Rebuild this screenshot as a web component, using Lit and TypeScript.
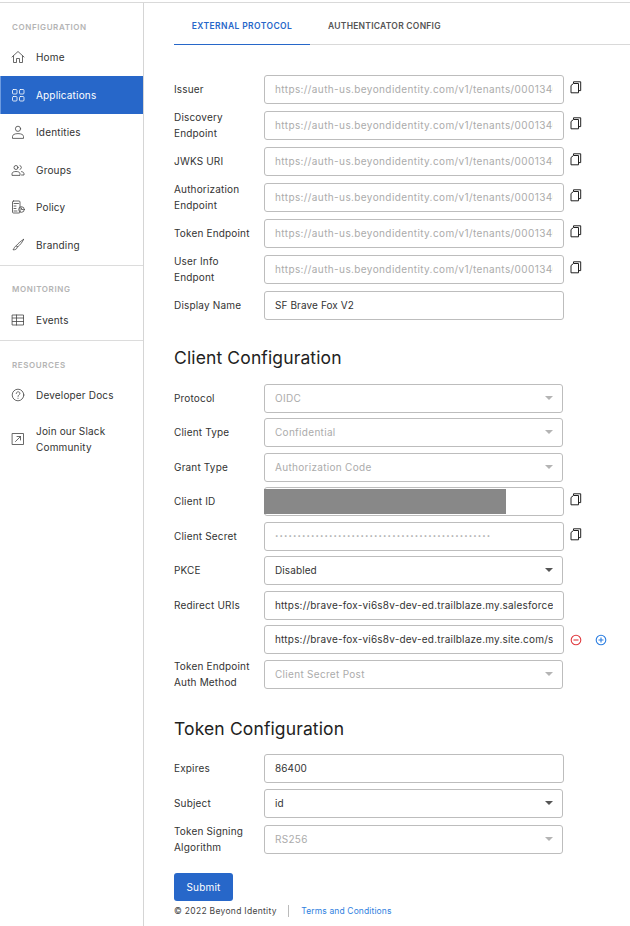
import { LitElement, html, css, svg } from "lit";
import { customElement } from "lit/decorators.js";

const ic = (body: unknown, size = 14, vb = 14) =>
  html`<svg width=${size} height=${size} viewBox="0 0 ${vb} ${vb}" fill="none" stroke="currentColor" stroke-width="0.8" stroke-linecap="round" stroke-linejoin="round">${body}</svg>`;

const icons: Record<string, unknown> = {
  home: ic(svg`<path d="M1 7 7 1.5 13 7M2.5 6V12.5H5.5V8.5H8.5V12.5H11.5V6"/>`),
  apps: ic(svg`<rect x="1.5" y="1.5" width="4.5" height="4.5" rx="1"/><rect x="8.5" y="1.5" width="4.5" height="4.5" rx="1"/><rect x="1.5" y="8.5" width="4.5" height="4.5" rx="1"/><rect x="8.5" y="8.5" width="4.5" height="4.5" rx="1"/>`),
  person: ic(svg`<circle cx="7" cy="3.8" r="2.6"/><path d="M1.5 13V11.5C1.5 9.8 3.5 8.6 7 8.6S12.5 9.8 12.5 11.5V13Z"/>`),
  group: ic(svg`<circle cx="5" cy="4.5" r="2"/><path d="M9 2.6A2 2 0 0 1 9 6.4M1 12V10.8C1 9.3 2.6 8.5 5 8.5S9 9.3 9 10.8V12ZM10.5 8.6C12 8.8 13 9.6 13 10.8V12H10.5"/>`),
  policy: ic(svg`<rect x="1.5" y="1" width="7.5" height="12" rx="1"/><path d="M3 3.5H7.5M3 6H5M3 8.5H5M3 11H6"/><circle cx="10.5" cy="9.5" r="2.8"/><path d="M10.5 8V9.5H12"/>`),
  brush: ic(svg`<path d="M12.5 1.5C10.5 2.5 7 5.5 5.5 7.5L6.8 8.8C8.8 7.2 11.8 3.8 12.5 1.5ZM5 8C3.5 8.3 3.5 10 2 11.8 4.2 12 6.2 11 6.3 9.3Z"/>`),
  table: ic(svg`<rect x="1.5" y="2" width="11" height="10"/><path d="M1.5 5H12.5M1.5 8.5H12.5M5.5 2V12"/>`),
  help: ic(svg`<circle cx="7" cy="7" r="5.8"/><path d="M5.2 5.5C5.2 3.2 8.9 3.2 8.9 5.4 8.9 6.8 7 6.8 7 8.4M7 10.2V10.4"/>`),
  ext: ic(svg`<rect x="1.5" y="1.5" width="11" height="11"/><path d="M4.5 9.5 9.5 4.5M6 4.5H9.5V8"/>`),
};

const copy = html`<svg class="copy" width="12" height="13" viewBox="0 0 12 13" fill="none" stroke="#222" stroke-width="1"><path d="M3.5 2.5V.8H10.7V9.6H8.5"/><path d="M3.5 2.5 8.5 2.5V11.8H1V4.5Z" fill="#fff"/></svg>`;

const URL_VAL = "https://auth-us.beyondidentity.com/v1/tenants/00013400000000/applications";

@customElement("app-root")
export class AppRoot extends LitElement {
  static styles = css`
    :host { display: block; height: 926px; overflow: hidden; background: #fff; font-family: Inter, "Open Sans", sans-serif; font-size: 10px; color: #333; letter-spacing: 0.17px; }
    .shell { display: flex; margin-top: 2px; border-top: 1px solid #d9d9d9; height: 923px; }
    nav { width: 143px; flex: none; border-right: 1px solid #d5d5d5; box-sizing: content-box; }
    .sect { border-bottom: 1px solid #dcdcdc; padding-bottom: 1px; }
    .sect:last-child { border: 0; }
    .head { font-size: 8px; font-weight: 600; color: #b4b4b4; letter-spacing: 0.6px; padding: 0 12px; height: 12px; line-height: 12px; }
    .first { margin-top: 18px; margin-bottom: 5px; }
    .other { margin-top: 17.5px; margin-bottom: 6px; }
    .res { margin-top: 18.5px; margin-bottom: 5px; }
    .item { display: flex; align-items: center; height: 37.5px; padding-left: 11px; gap: 11px; color: #333; }
    .item svg { flex: none; width: 14px; height: 14px; color: #444; }
    .item.active { background: #2767c9; color: #fff; border-left: 1px solid #6d9be0; padding-left: 10px; height: 38px; }
    .item.active svg { color: #fff; }
    .item.two { height: 42px; line-height: 16px; margin-top: 4px; }
    main { flex: 1; min-width: 0; padding-left: 30px; }
    .tabs { display: flex; height: 41px; border-bottom: 1px solid #d9d9d9; font-size: 8.5px; font-weight: 600; letter-spacing: 0.4px; color: #555; }
    .tab { display: flex; align-items: center; justify-content: center; height: 41px; box-sizing: border-box; padding-top: 5px; }
    .tab.on { width: 136px; color: #2767c9; border-bottom: 1px solid #2767c9; height: 42px; }
    .tab.off { margin-left: 18px; letter-spacing: 0.25px; }
    .form { display: grid; grid-template-columns: 90px 300px 60px; grid-auto-rows: 29px; row-gap: 7px; margin-top: 30px; align-items: center; }
    .form.tight { row-gap: 5.5px; margin-top: 13.5px; }
    .form.token { row-gap: 6.25px; margin-top: 13px; }
    label { line-height: 16px; grid-column: 1; white-space: pre-line; margin-top: -1px; }
    .field { grid-column: 2; box-sizing: border-box; width: 300px; height: 29px; border: 1px solid #bdbdbd; border-radius: 3px; padding: 0 10px 1px; letter-spacing: 0.1px; color: #333; background: #fff; position: relative; display: flex; align-items: center; }
    .field.dis { color: #ababab; letter-spacing: 0.39px; }
    .field.uri { letter-spacing: 0.2px; }
    .clip { flex: 1; min-width: 0; overflow: hidden; white-space: nowrap; }
    .sel { width: 299px; justify-content: space-between; padding-right: 9px; }
    .sel.dis { letter-spacing: 0.3px; }
    .caret { width: 0; height: 0; border-left: 4px solid transparent; border-right: 4px solid transparent; border-top: 4px solid #555; }
    .dis .caret { border-top-color: #b4b4b4; }
    .acts { grid-column: 3; display: flex; align-items: center; gap: 13px; padding-left: 6px; padding-bottom: 4px; }
    .acts.pm { padding-bottom: 0; padding-top: 1px; }
    .redact { position: absolute; left: -1px; top: 1px; width: 242px; height: 25px; background: #888; }
    .dots { font-size: 6px; letter-spacing: 1.13px; white-space: nowrap; overflow: hidden; }
    h2 { font-size: 17.5px; font-weight: 400; color: #222; letter-spacing: 0.13px; margin: 26px 0 0; line-height: 24px; }
    h2.second { margin-top: 28.5px; }
    .btn { display: block; margin-top: 19px; width: 59px; height: 28px; box-sizing: border-box; border: 0; border-radius: 3px; background: #2767c9; color: #fff; font: inherit; letter-spacing: inherit; padding: 0; }
    .foot { display: flex; align-items: center; margin-top: 4px; font-size: 8.5px; letter-spacing: 0.3px; color: #444; height: 12px; }
    .foot i { width: 1px; height: 12px; background: #bbb; margin: 0 12px 0 11.5px; }
    .foot a { color: #2f7fe0; letter-spacing: 0.12px; }
  `;

  private item(ic: string, text: unknown, cls = "") {
    return html`<div class="item ${cls}">${icons[ic]}<span>${text}</span></div>`;
  }
  private urlRow(l: string) {
    return html`<label>${l}</label><div class="field dis"><span class="clip">${URL_VAL}</span></div><div class="acts">${copy}</div>`;
  }
  private sel(l: string, v: string, dis = true) {
    return html`<label>${l}</label><div class="field sel ${dis ? "dis" : ""}"><span>${v}</span><span class="caret"></span></div>`;
  }
  private inp(l: string, v: string, cls = "") {
    return html`<label>${l}</label><div class="field ${cls}"><span class="clip">${v}</span></div>`;
  }

  render() {
    return html`<div class="shell">
      <nav>
        <div class="sect">
          <div class="head first">CONFIGURATION</div>
          ${this.item("home", "Home")}
          ${this.item("apps", "Applications", "active")}
          ${this.item("person", "Identities")}
          ${this.item("group", "Groups")}
          ${this.item("policy", "Policy")}
          ${this.item("brush", "Branding")}
        </div>
        <div class="sect">
          <div class="head other">MONITORING</div>
          ${this.item("table", "Events")}
        </div>
        <div class="sect">
          <div class="head res">RESOURCES</div>
          ${this.item("help", "Developer Docs")}
          ${this.item("ext", html`Join our Slack<br />Community`, "two")}
        </div>
      </nav>
      <main>
        <div class="tabs">
          <div class="tab on">EXTERNAL PROTOCOL</div>
          <div class="tab off">AUTHENTICATOR CONFIG</div>
        </div>
        <div class="form">
          ${this.urlRow("Issuer")}
          ${this.urlRow("Discovery\nEndpoint")}
          ${this.urlRow("JWKS URI")}
          ${this.urlRow("Authorization\nEndpoint")}
          ${this.urlRow("Token Endpoint")}
          ${this.urlRow("User Info\nEndpont")}
          ${this.inp("Display Name", "SF Brave Fox V2")}
        </div>
        <h2>Client Configuration</h2>
        <div class="form tight">
          ${this.sel("Protocol", "OIDC")}
          ${this.sel("Client Type", "Confidential")}
          ${this.sel("Grant Type", "Authorization Code")}
          <label>Client ID</label>
          <div class="field"><div class="redact"></div></div>
          <div class="acts">${copy}</div>
          <label>Client Secret</label>
          <div class="field dis"><span class="dots">${"•".repeat(48)}</span></div>
          <div class="acts">${copy}</div>
          ${this.sel("PKCE", "Disabled", false)}
          ${this.inp("Redirect URIs", "https://brave-fox-vi6s8v-dev-ed.trailblaze.my.salesforce.com/services", "uri")}
          <div class="field uri"><span class="clip">https://brave-fox-vi6s8v-dev-ed.trailblaze.my.site.com/services/authcallback</span></div>
          <div class="acts pm">
            <svg width="12" height="12" viewBox="0 0 12 12" fill="none" stroke="#e0393e" stroke-width="1.1"><circle cx="6" cy="6" r="4.8"/><path d="M3.5 6H8.5"/></svg>
            <svg width="12" height="12" viewBox="0 0 12 12" fill="none" stroke="#2a7de1" stroke-width="1.1"><circle cx="6" cy="6" r="4.8"/><path d="M3.5 6H8.5M6 3.5V8.5"/></svg>
          </div>
          ${this.sel("Token Endpoint\nAuth Method", "Client Secret Post")}
        </div>
        <h2 class="second">Token Configuration</h2>
        <div class="form tight token">
          ${this.inp("Expires", "86400")}
          ${this.sel("Subject", "id", false)}
          ${this.sel("Token Signing\nAlgorithm", "RS256")}
        </div>
        <button class="btn">Submit</button>
        <div class="foot"><span>© 2022 Beyond Identity</span><i></i><a>Terms and Conditions</a></div>
      </main>
    </div>`;
  }
}
